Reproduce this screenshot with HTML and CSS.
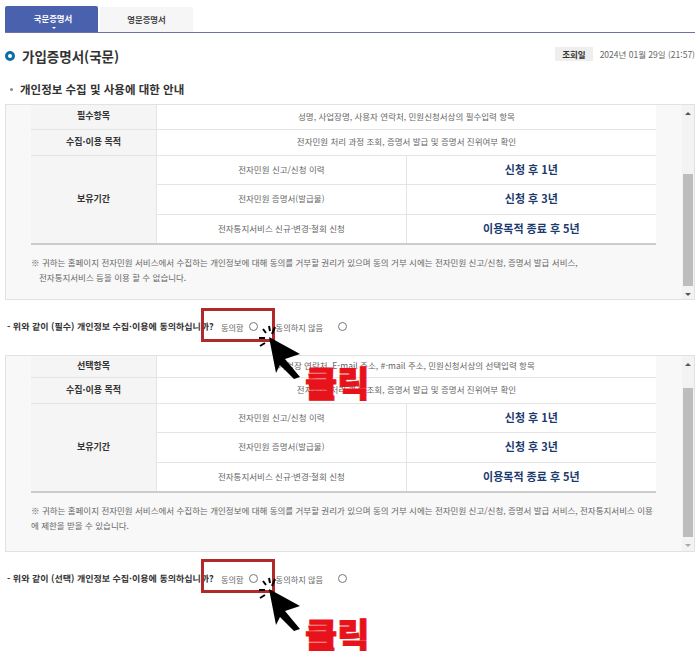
FILE: index.html
```html
<!DOCTYPE html>
<html lang="ko">

<head>
    <meta charset="UTF-8">
    <meta name="viewport" content="width=device-width">
    <title>가입증명서(국문)</title>
    <link rel="stylesheet" href="styles.css">
</head>

<body>
    <div class="tabs">
        <a class="tab active">국문증명서</a>
        <a class="tab">영문증명서</a>
    </div>

    <div class="title-row">
        <h1>가입증명서(국문)</h1>
        <div class="date">
            <span class="date-label">조회일</span>
            <span>2024년 01월 29일 (21:57)</span>
        </div>
    </div>

    <h2>개인정보 수집 및 사용에 대한 안내</h2>

    <div class="box">
        <div class="box-body">
            <table>
                <tr class="row-a">
                    <th>필수항목</th>
                    <td colspan="2">성명, 사업장명, 사용자 연락처, 민원신청서상의 필수입력 항목</td>
                </tr>
                <tr class="row-b">
                    <th>수집·이용 목적</th>
                    <td colspan="2">전자민원 처리 과정 조회, 증명서 발급 및 증명서 진위여부 확인</td>
                </tr>
                <tr class="row-c">
                    <th rowspan="3">보유기간</th>
                    <td>전자민원 신고/신청 이력</td>
                    <td class="period">신청 후 1년</td>
                </tr>
                <tr class="row-c">
                    <td>전자민원 증명서(발급물)</td>
                    <td class="period">신청 후 3년</td>
                </tr>
                <tr class="row-c">
                    <td>전자통지서비스 신규·변경·철회 신청</td>
                    <td class="period">이용목적 종료 후 5년</td>
                </tr>
            </table>
            <p class="note">※ 귀하는 홈페이지 전자민원 서비스에서 수집하는 개인정보에 대해 동의를 거부할 권리가 있으며 동의 거부 시에는 전자민원 신고/신청, 증명서 발급 서비스,<br><span class="indent">전자통지서비스 등을 이용 할 수 없습니다.</span></p>
        </div>
        <div class="scrollbar">
            <span class="arrow up"></span>
            <span class="track"><span class="thumb thumb-low"></span></span>
            <span class="arrow down"></span>
        </div>
    </div>

    <div class="agree">
        <strong>- 위와 같이 (필수) 개인정보 수집·이용에 동의하십니까?</strong>
        <label class="yes">동의함 <span class="radio"></span></label>
        <label class="no">동의하지 않음 <span class="radio"></span></label>
        <span class="red-box"></span>
        <svg class="cursor" width="50" height="62" viewBox="0 0 50 62">
            <path d="M12 14 L43 31 L28 36 L43 54 L37 56 L23 42 L19 50 Z" fill="#000"/>
            <path d="M6 6 L9 10 M12 3 L13 8 M2 15 L8 15 M3 23 L8 20 M18 4 L15 11" stroke="#000" stroke-width="2" fill="none"/>
        </svg>
        <span class="click">클릭</span>
    </div>

    <div class="box box-two">
        <div class="box-body">
            <table>
                <tr class="row-s">
                    <th>선택항목</th>
                    <td colspan="2">사업장 연락처, E-mail 주소, #-mail 주소, 민원신청서상의 선택입력 항목</td>
                </tr>
                <tr class="row-b">
                    <th>수집·이용 목적</th>
                    <td colspan="2">전자민원 처리 과정 조회, 증명서 발급 및 증명서 진위여부 확인</td>
                </tr>
                <tr class="row-c">
                    <th rowspan="3">보유기간</th>
                    <td>전자민원 신고/신청 이력</td>
                    <td class="period">신청 후 1년</td>
                </tr>
                <tr class="row-c">
                    <td>전자민원 증명서(발급물)</td>
                    <td class="period">신청 후 3년</td>
                </tr>
                <tr class="row-c">
                    <td>전자통지서비스 신규·변경·철회 신청</td>
                    <td class="period">이용목적 종료 후 5년</td>
                </tr>
            </table>
            <p class="note">※ 귀하는 홈페이지 전자민원 서비스에서 수집하는 개인정보에 대해 동의를 거부할 권리가 있으며 동의 거부 시에는 전자민원 신고/신청, 증명서 발급 서비스, 전자통지서비스 이용<br>에 제한을 받을 수 있습니다.</p>
        </div>
        <div class="scrollbar">
            <span class="arrow up"></span>
            <span class="track"><span class="thumb thumb-two"></span></span>
            <span class="arrow down faint"></span>
        </div>
    </div>

    <div class="agree agree-two">
        <strong>- 위와 같이 (선택) 개인정보 수집·이용에 동의하십니까?</strong>
        <label class="yes">동의함 <span class="radio"></span></label>
        <label class="no">동의하지 않음 <span class="radio"></span></label>
        <span class="red-box"></span>
        <svg class="cursor" width="50" height="62" viewBox="0 0 50 62">
            <path d="M12 14 L43 31 L28 36 L43 54 L37 56 L23 42 L19 50 Z" fill="#000"/>
            <path d="M6 6 L9 10 M12 3 L13 8 M2 15 L8 15 M3 23 L8 20 M18 4 L15 11" stroke="#000" stroke-width="2" fill="none"/>
        </svg>
        <span class="click">클릭</span>
    </div>
</body>

</html>
```

FILE: styles.css
```css
body {
    font-family: 'Noto Sans CJK KR', 'Noto Sans', sans-serif;
    background-color: #fff;
    color: #666;
    margin: 0;
    padding: 6px 5px 0;
    font-size: 9px;
    height: 645px;
    overflow: hidden;
}

.tabs {
    display: flex;
    align-items: flex-end;
    gap: 2px;
    height: 26px;
    border-bottom: 1px solid #6d72a6;
}

.tab {
    display: flex;
    align-items: center;
    justify-content: center;
    width: 93px;
    height: 25px;
    padding-bottom: 2px;
    box-sizing: border-box;
    background-color: #f6f6f6;
    color: #444;
    font-size: 8.4px;
    font-weight: 700;
}

.tab.active {
    position: relative;
    height: 26px;
    padding-left: 3px;
    background-color: #4a62ad;
    color: #fff;
    border-radius: 2px 2px 0 0;
}

.tab.active::after {
    content: "";
    position: absolute;
    left: 50%;
    bottom: 3px;
    margin-left: 0;
    border: 2px solid transparent;
    border-top: 2px solid #fff;
    border-bottom: 0;
}

.title-row {
    display: flex;
    justify-content: space-between;
    align-items: center;
    margin-top: 12px;
    height: 22px;
}

h1 {
    display: flex;
    align-items: center;
    gap: 7px;
    margin: 0;
    color: #333;
    font-size: 13.5px;
    font-weight: 700;
}

h1::before {
    content: "";
    width: 4px;
    height: 4px;
    border: 3px solid #0a6ea8;
    border-radius: 50%;
}

.date {
    display: flex;
    align-items: center;
    align-self: flex-start;
    gap: 7px;
    margin-top: 2px;
    color: #666;
    font-size: 8.5px;
}

.date-label {
    background-color: #eee;
    color: #333;
    font-weight: 700;
    padding: 0 7px;
    line-height: 14px;
}

h2 {
    display: flex;
    align-items: center;
    gap: 7px;
    margin: 13px 0 0 5px;
    height: 18px;
    color: #333;
    font-size: 11.5px;
    font-weight: 700;
}

h2::before {
    content: "";
    width: 3px;
    height: 3px;
    background-color: #888;
    border-radius: 50%;
}

.box {
    display: flex;
    margin-top: 6px;
    height: 194px;
    border: 1px solid #e2e2e2;
    background-color: #f8f8f8;
}

.box-two {
    margin-top: 0;
    height: 195px;
}

.box-body {
    flex: 1;
    padding-left: 25px;
    width: 625px;
}

.box-body table {
    width: 625px;
}

table {
    border-collapse: collapse;
    table-layout: fixed;
    border-bottom: 2px solid #ccc;
}

th {
    width: 125px;
    padding: 0 0 2px;
    background-color: #f5f5f5;
    color: #333;
    font-size: 9px;
    font-weight: 700;
    border-bottom: 1px solid #e4e4e4;
}

td {
    background-color: #fff;
    color: #666;
    text-align: center;
    font-size: 8.5px;
    border-bottom: 1px solid #e4e4e4;
    border-left: 1px solid #e4e4e4;
    padding: 0 0 2px;
}

tr:last-child th,
tr:last-child td {
    border-bottom: 0;
}

td.period {
    color: #1c3a6e;
    font-size: 11px;
    font-weight: 700;
}

.row-a {
    height: 24px;
}

.row-s {
    height: 21px;
}

.row-b {
    height: 26px;
}

.row-c {
    height: 29.5px;
}

.note {
    margin: 10px 0 0;
    color: #666;
    font-size: 8.5px;
    line-height: 15px;
    white-space: nowrap;
}

.indent {
    padding-left: 8px;
}

.scrollbar {
    display: flex;
    flex-direction: column;
    align-items: center;
    flex: none;
    width: 12px;
    background-color: #f3f3f3;
}

.track {
    flex: 1;
    display: flex;
    flex-direction: column;
    width: 100%;
}

.thumb {
    display: block;
    width: 10px;
    margin: 0 auto;
    background-color: #bdbdbd;
}

.thumb-low {
    margin-top: 52px;
    height: 112px;
}

.thumb-two {
    margin-top: 15px;
    height: 149px;
}

.arrow {
    flex: none;
    width: 0;
    margin: 7px 0;
    border: 3px solid transparent;
}

.arrow.up {
    border-top: 0;
    border-bottom: 3px solid #555;
}

.arrow.down {
    border-bottom: 0;
    border-top: 3px solid #555;
}

.arrow.faint {
    border-top-color: #aaa;
}

.agree {
    position: relative;
    display: flex;
    align-items: center;
    box-sizing: border-box;
    height: 55px;
    padding: 0 0 2px 2px;
    font-size: 8.2px;
}

.agree strong {
    width: 214px;
    flex: none;
    color: #333;
    font-size: 9px;
    text-rendering: geometricPrecision;
    white-space: nowrap;
}

.agree label {
    display: flex;
    align-items: center;
    gap: 5px;
}

.agree .no {
    margin-left: 18px;
    gap: 15px;
}

.radio {
    width: 7px;
    height: 7px;
    border: 1px solid #777;
    border-radius: 50%;
    background-color: #fff;
}

.red-box {
    position: absolute;
    left: 196px;
    top: 8px;
    width: 68px;
    height: 28px;
    border: 3px solid #b02a2a;
}

.agree-two .red-box {
    top: 7px;
}

.cursor {
    position: absolute;
    left: 252px;
    top: 23px;
}

.click {
    position: absolute;
    left: 300px;
    top: 65px;
    color: #e8121a;
    font-size: 35px;
    font-weight: 900;
    line-height: 34px;
    white-space: nowrap;
    -webkit-text-stroke: 1px #e8121a;
}
```
